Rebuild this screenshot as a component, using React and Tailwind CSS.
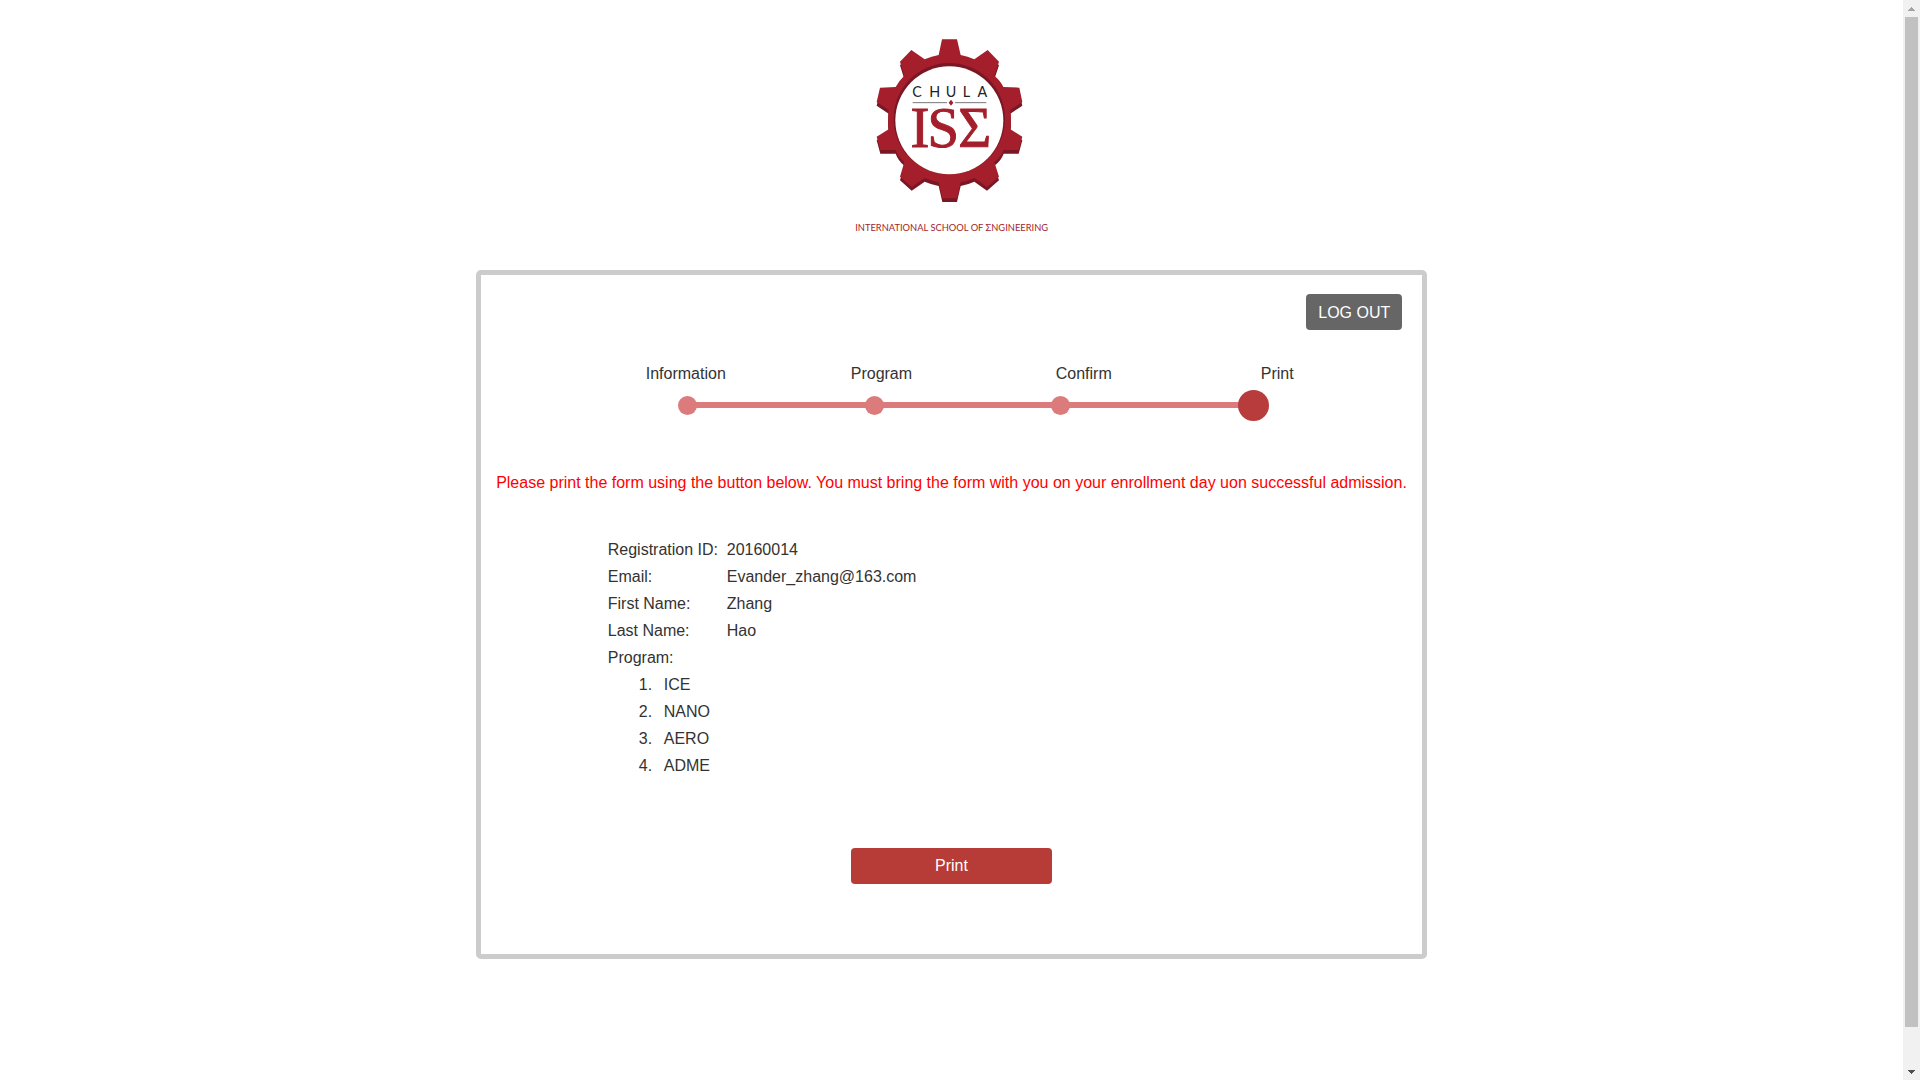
const steps = ["Information", "Program", "Confirm", "Print"];

const details = [
  ["Registration ID:", "20160014"],
  ["Email:", "Evander_zhang@163.com"],
  ["First Name:", "Zhang"],
  ["Last Name:", "Hao"],
];

const programs = ["ICE", "NANO", "AERO", "ADME"];

const gear =
  "M305 58H350L361 105Q382 109 402 118L442 90L476 125L462 167Q482 184 489 201L537 203L546 246L510 270Q514 300 510 328L546 350L535 390L490 390Q482 412 462 426L476 470L440 501L402 474Q382 483 361 487L350 535H306L295 487Q274 483 253 474L214 501L179 470L192 426Q174 412 166 390L120 390L109 350L145 328Q141 300 145 270L109 246L119 203L166 201Q174 184 192 167L179 125L213 90L253 118Q274 109 295 105Z";

function Logo() {
  return (
    <svg
      viewBox="5 0 660 660"
      className="block size-[220px]"
      role="img"
      aria-label="Chula ISE, International School of Engineering"
    >
      <path d={gear} fill="#7a1725" transform="translate(0 11)" />
      <path d={gear} fill="#a41e2b" />
      <circle cx="327" cy="296" r="167" fill="#7a1725" />
      <circle cx="327" cy="301" r="162" fill="#fff" />
      <g fontFamily="Lato, sans-serif" fontSize="43" fill="#222" textAnchor="middle">
        <text x="230" y="231">C</text>
        <text x="283" y="231">H</text>
        <text x="332" y="231">U</text>
        <text x="378" y="231">L</text>
        <text x="426" y="231">A</text>
      </g>
      <path d="M217 248H320M344 248H438" stroke="#777" strokeWidth="3" />
      <path d="M332 239L339 248L332 257L325 248Z" fill="#a41e2b" />
      <g
        fontFamily="'Liberation Serif', serif"
        fontSize="170"
        fill="#a41e2b"
        stroke="#a41e2b"
        strokeWidth="3"
        textAnchor="middle"
      >
        <text x="239" y="382">I</text>
        <text x="309" y="382">S</text>
        <text x="403" y="382">Σ</text>
      </g>
      <text
        x="334"
        y="633"
        textAnchor="middle"
        fontFamily="Lato, sans-serif"
        fontSize="28"
        fill="#a41e2b"
      >
        INTERNATIONAL SCHOOL OF ΣNGINEERING
      </text>
    </svg>
  );
}

function Stepper() {
  return (
    <nav aria-label="Progress" className="mt-8 pl-[165px]">
      <ol className="grid w-[99%] grid-cols-[4fr_4fr_4fr_3fr] leading-6">
        {steps.map((step, i) => (
          <li key={step} aria-current={i === 3 ? "step" : undefined}>
            {step}
          </li>
        ))}
      </ol>
      <div className="mt-[3px] mr-[153px] ml-8 flex h-8 items-center">
        {[0, 1, 2].map((i) => (
          <div key={i} className="flex flex-1 items-center">
            <span className="size-[19px] shrink-0 rounded-full bg-[#dc7b7b]" />
            <span className="-mx-px h-1.5 flex-1 bg-[#dc7b7b]" />
          </div>
        ))}
        <span className="size-[31px] shrink-0 rounded-full bg-[#b93c3c]" />
      </div>
    </nav>
  );
}

function ScrollRail() {
  return (
    <div
      aria-hidden="true"
      className="sticky top-0 flex h-screen w-[17px] shrink-0 flex-col items-center bg-[#f1f1f1]"
    >
      <div className="flex h-[17px] shrink-0 items-center">
        <svg viewBox="0 0 7 4" className="h-1 w-[7px]" shapeRendering="crispEdges">
          <path d="M3 0h1v1h1v1h1v1h1v1H0V3h1V2h1V1h1z" fill="#a3a3a3" />
        </svg>
      </div>
      <div className="w-full flex-1 px-0.5">
        <div className="h-[96.6%] bg-[#c1c1c1]" />
      </div>
      <div className="flex h-[17px] shrink-0 items-center">
        <svg viewBox="0 0 7 4" className="h-1 w-[7px]" shapeRendering="crispEdges">
          <path d="M0 0h7v1H6v1H5v1H4v1H3V3H2V2H1V1H0z" fill="#505050" />
        </svg>
      </div>
    </div>
  );
}

export default function App() {
  return (
    <div className="flex min-h-screen bg-white font-['Liberation_Sans',Arial,sans-serif] text-base text-[#333]">
      <main className="flex flex-1 flex-col items-center pt-5">
        <Logo />
        <section className="mt-[30px] w-1/2 rounded-[5px] border-5 border-[#ccc] pt-[19px] pb-[70px]">
          <div className="flex justify-end pr-5">
            <button
              type="button"
              className="h-9 rounded bg-[#666] px-3 pt-0.5 text-white"
            >
              LOG OUT
            </button>
          </div>
          <Stepper />
          <p className="mt-[50px] text-center leading-6 text-[#f00]">
            Please print the form using the button below. You must bring the form with you on your
            enrollment day uon successful admission.
          </p>
          <div className="mt-[41px] pl-[127px] leading-[27px]">
            <dl className="grid grid-cols-[119px_1fr]">
              {details.map(([label, value]) => (
                <div key={label} className="contents">
                  <dt>{label}</dt>
                  <dd>{value}</dd>
                </div>
              ))}
            </dl>
            <p>Program:</p>
            <ol className="pl-[31px]">
              {programs.map((name, i) => (
                <li key={name} className="flex">
                  <span className="w-[25px]">{i + 1}.</span>
                  {name}
                </li>
              ))}
            </ol>
          </div>
          <div className="mt-[69px] flex justify-center">
            <button type="button" className="h-9 w-[201px] rounded bg-[#b73b36] text-white">
              Print
            </button>
          </div>
        </section>
      </main>
      <ScrollRail />
    </div>
  );
}
